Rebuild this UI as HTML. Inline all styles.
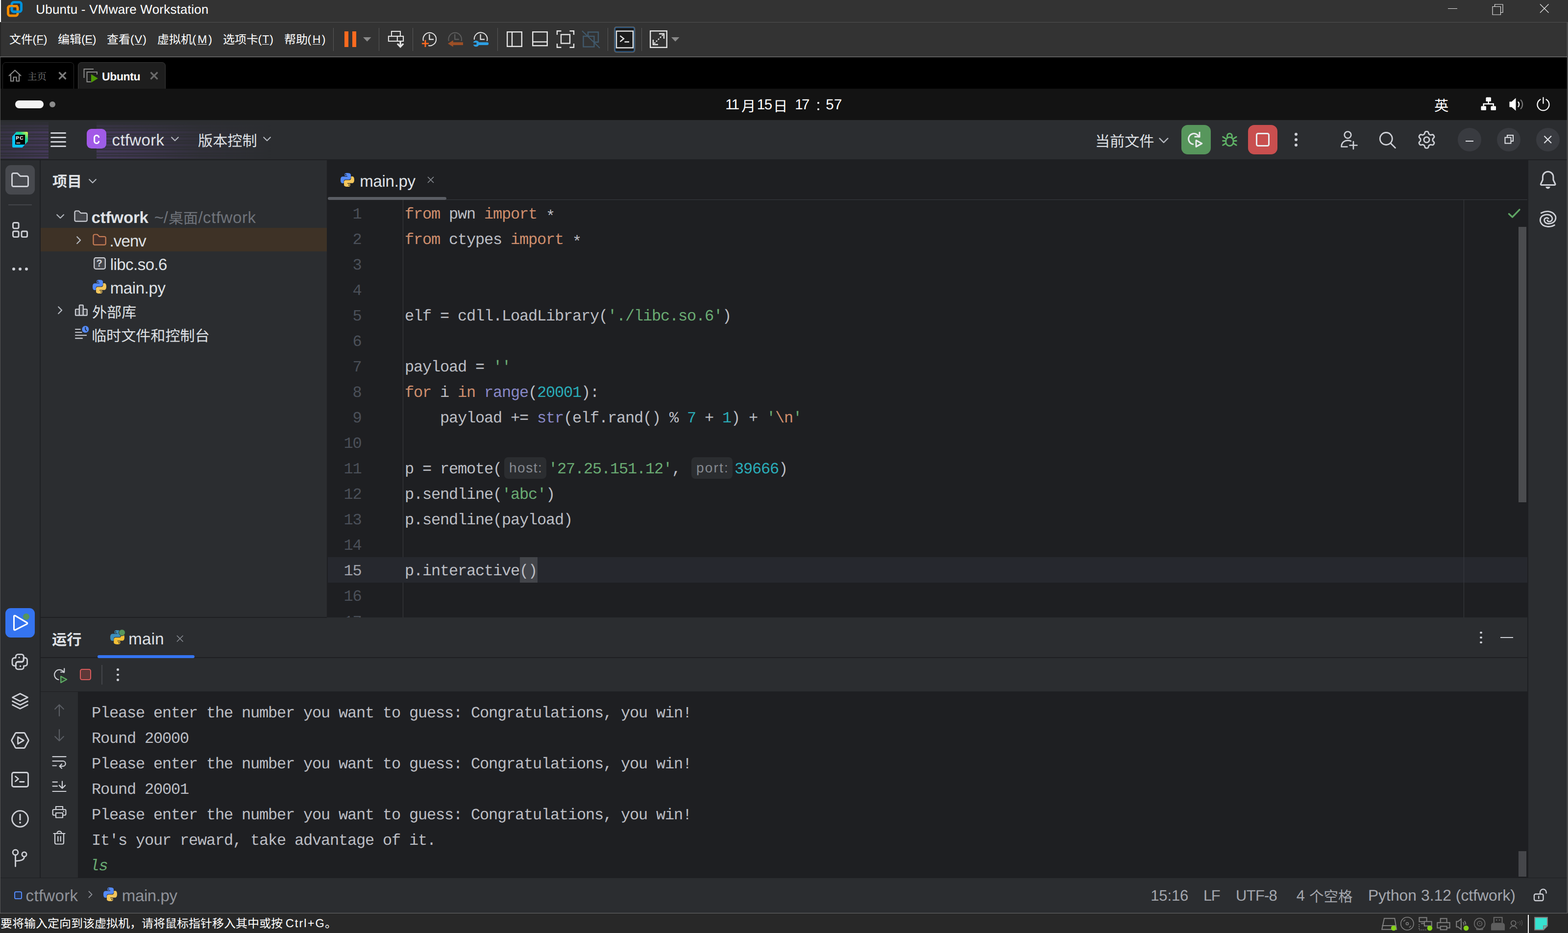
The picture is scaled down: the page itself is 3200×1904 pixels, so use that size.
<!DOCTYPE html><html lang="zh-CN"><head><meta charset="utf-8"><title>Ubuntu - VMware Workstation</title><style>
html,body{margin:0;padding:0}
body{width:3200px;height:1904px;position:relative;overflow:hidden;background:#1e1f22;font-family:"Liberation Sans",sans-serif;font-kerning:none;text-rendering:geometricPrecision}
body>div,body>span,body>svg{position:absolute}
.t{white-space:pre;display:block}
.c{overflow:visible}
.c text{font-family:"Liberation Sans","Noto Sans CJK SC",sans-serif;white-space:pre}
.i{overflow:visible;display:block}
.m{font:400 32px/42px 'Liberation Mono',monospace;letter-spacing:-1.203px}
</style></head><body><div style="left:0px;top:0px;width:3200px;height:1904px;background:#2b2d30;"></div>
<div style="left:0px;top:0px;width:3200px;height:46px;background:#333333;"></div>
<div style="left:0px;top:0px;width:2px;height:45px;background:#ffffff;"></div>
<div style="left:2px;top:45px;width:3198px;height:1px;background:#505050;"></div>
<svg class="i" style="left:12px;top:0px;" width="40" height="40" viewBox="0 0 40 40"><rect x="4.5" y="12.5" width="19.5" height="19.5" rx="4" fill="none" stroke="#f38b00" stroke-width="5"/><rect x="12" y="4.5" width="19.5" height="19.5" rx="4" fill="none" stroke="#0091da" stroke-width="5"/><path d="M4.5 22 V16.5 a4 4 0 0 1 4 -4 H24" fill="none" stroke="#f38b00" stroke-width="5"/><path d="M12 14 V20 a4 4 0 0 0 4 4 h4" fill="none" stroke="#0091da" stroke-width="5"/></svg>
<span class="t" style="left:73.19px;top:1.79px;font:400 26px/34px 'Liberation Sans',sans-serif;color:#ffffff;letter-spacing:0.227px;">Ubuntu - VMware Workstation</span>
<div style="left:2955px;top:17px;width:19px;height:1.3px;background:#e6e6e6;"></div>
<svg class="i" style="left:3043px;top:6px;" width="28" height="28" viewBox="0 0 28 28"><path d="M3 7.5 H19.5 V24 H3 Z M7.5 7.5 V3 H24 V19.5 H19.5" fill="none" stroke="#e6e6e6" stroke-width="1.2"/></svg>
<svg class="i" style="left:3140px;top:6px;" width="24" height="24" viewBox="0 0 24 24"><path d="M3 2.5 L20.5 20 M20.5 2.5 L3 20" fill="none" stroke="#e6e6e6" stroke-width="1.3"/></svg>
<div style="left:0px;top:46px;width:3200px;height:69px;background:#333333;"></div>
<div style="left:0px;top:46px;width:2px;height:69px;background:#262626;"></div>
<div style="left:0px;top:114.5px;width:3200px;height:2.5px;background:#5c5c5c;"></div>
<svg class="c" style="left:18.50px;top:88.80px" width="1" height="1" fill="#ffffff"><text x="0" y="0" font-size="24">文件</text></svg>
<span class="t" style="left:66.57px;top:65.33px;font:400 23px/30px 'Liberation Sans',sans-serif;color:#ffffff;letter-spacing:0.242px;">(F)</span>
<div style="left:74.5px;top:89.8px;width:14.0px;height:1.3px;background:#ffffff;"></div>
<svg class="c" style="left:118.00px;top:88.80px" width="1" height="1" fill="#ffffff"><text x="0" y="0" font-size="24">编辑</text></svg>
<span class="t" style="left:166.07px;top:65.33px;font:400 23px/30px 'Liberation Sans',sans-serif;color:#ffffff;letter-spacing:-0.153px;">(E)</span>
<div style="left:173.6px;top:89.8px;width:15.3px;height:1.3px;background:#ffffff;"></div>
<svg class="c" style="left:218.00px;top:88.80px" width="1" height="1" fill="#ffffff"><text x="0" y="0" font-size="24">查看</text></svg>
<span class="t" style="left:266.07px;top:65.33px;font:400 23px/30px 'Liberation Sans',sans-serif;color:#ffffff;letter-spacing:1.097px;">(V)</span>
<div style="left:274.8px;top:89.8px;width:15.3px;height:1.3px;background:#ffffff;"></div>
<svg class="c" style="left:320.50px;top:88.80px" width="1" height="1" fill="#ffffff"><text x="0" y="0" font-size="24">虚拟机</text></svg>
<span class="t" style="left:392.57px;top:65.33px;font:400 23px/30px 'Liberation Sans',sans-serif;color:#ffffff;letter-spacing:2.938px;">(M)</span>
<div style="left:403.2px;top:89.8px;width:19.2px;height:1.3px;background:#ffffff;"></div>
<svg class="c" style="left:454.50px;top:88.80px" width="1" height="1" fill="#ffffff"><text x="0" y="0" font-size="24">选项卡</text></svg>
<span class="t" style="left:526.57px;top:65.33px;font:400 23px/30px 'Liberation Sans',sans-serif;color:#ffffff;letter-spacing:0.992px;">(T)</span>
<div style="left:535.2px;top:89.8px;width:14.0px;height:1.3px;background:#ffffff;"></div>
<svg class="c" style="left:579.50px;top:88.80px" width="1" height="1" fill="#ffffff"><text x="0" y="0" font-size="24">帮助</text></svg>
<span class="t" style="left:627.57px;top:65.33px;font:400 23px/30px 'Liberation Sans',sans-serif;color:#ffffff;letter-spacing:2.462px;">(H)</span>
<div style="left:637.7px;top:89.8px;width:16.6px;height:1.3px;background:#ffffff;"></div>
<div style="left:680px;top:57px;width:1px;height:47px;background:#585858;"></div>
<div style="left:773px;top:57px;width:1px;height:47px;background:#585858;"></div>
<div style="left:842px;top:57px;width:1px;height:47px;background:#585858;"></div>
<div style="left:1015px;top:57px;width:1px;height:47px;background:#585858;"></div>
<div style="left:1240px;top:57px;width:1px;height:47px;background:#585858;"></div>
<div style="left:1309px;top:57px;width:1px;height:47px;background:#585858;"></div>
<div style="left:702.7px;top:64px;width:8.4px;height:32px;background:#ff6a1f;"></div>
<div style="left:718.5px;top:64px;width:8.4px;height:32px;background:#ff6a1f;"></div>
<svg class="i" style="left:740.5px;top:75.8px;" width="17" height="9" viewBox="0 0 17 9"><path d="M0 0 H16.5 L8.25 8.7 Z" fill="#8a8a8a"/></svg>
<svg class="i" style="left:1369.5px;top:75.8px;" width="17" height="9" viewBox="0 0 17 9"><path d="M0 0 H16.5 L8.25 8.7 Z" fill="#8a8a8a"/></svg>
<svg class="i" style="left:780px;top:50px;" width="230" height="60" viewBox="0 0 230 60"><g fill="none" stroke="#e4e4e4" stroke-width="2.1"><rect x="19" y="14" width="18" height="10"/><rect x="12.9" y="24" width="30.2" height="10"/><path d="M30.9 24.0 V34"/></g><path d="M37.1 35.0 V44" stroke="#e4e4e4" stroke-width="3.4" fill="none"/><path d="M31.0 39.2 L37.1 45.6 L43.2 39.2" fill="none" stroke="#e4e4e4" stroke-width="3.4"/><path d="M84.0 33.6 A13.3 13.3 0 1 1 94.2 43.1" fill="none" stroke="#e4e4e4" stroke-width="2"/><path d="M96.4 19.8 V30.4 H105" fill="none" stroke="#e4e4e4" stroke-width="2.2"/><path d="M88.0 31.8 V46 M81.0 38.9 H95" fill="none" stroke="#ff6a1f" stroke-width="2.8"/><path d="M135.9 33.7 A13.3 13.3 0 1 1 161.5 33.7" fill="none" stroke="#5e5e5e" stroke-width="2"/><path d="M148.3 19.8 V30.4 H156.8" fill="none" stroke="#5e5e5e" stroke-width="2.2"/><path d="M133.9 38.9 L144.8 32.3 V36.2 H165 V42 H144.8 V45.6 Z" fill="#9c4f26"/><path d="M187.9 30.8 A13.3 13.3 0 1 1 213.8 33.7" fill="none" stroke="#e4e4e4" stroke-width="2"/><path d="M200.6 19.8 V30.4 H209" fill="none" stroke="#e4e4e4" stroke-width="2.2"/><path d="M193.0 36.2 H214.3 a2.9 2.9 0 0 1 0 5.8 H193 Z" fill="#2d9fe3"/><circle cx="191.6" cy="39" r="6.3" fill="#2d9fe3"/><rect x="184.5" y="36.9" width="8" height="4.4" fill="#333"/></svg>
<svg class="i" style="left:1032px;top:62px;" width="36" height="36" viewBox="0 0 36 36"><g fill="none" stroke="#e4e4e4" stroke-width="2.4"><rect x="3.2" y="3.2" width="29.6" height="29.6"/><path d="M13 3 V33"/></g></svg>
<svg class="i" style="left:1084px;top:62px;" width="36" height="36" viewBox="0 0 36 36"><g fill="none" stroke="#e4e4e4" stroke-width="2.4"><rect x="3.2" y="3.2" width="29.6" height="28"/><path d="M3 23.5 H33"/></g></svg>
<svg class="i" style="left:1134px;top:60px;" width="40" height="40" viewBox="0 0 40 40"><g fill="none" stroke="#e4e4e4" stroke-width="2.4"><rect x="11" y="10.5" width="18" height="18"/><path d="M3 11 V3.2 H11.5 M28.5 3.2 H37 V11 M37 29 V36.8 H28.5 M11.5 36.8 H3 V29"/></g></svg>
<svg class="i" style="left:1186px;top:60px;" width="40" height="40" viewBox="0 0 40 40"><g fill="none" stroke="#41596b" stroke-width="2.4"><path d="M14 14 V5.5 H35 V26 H26.5"/><rect x="4.5" y="14" width="22" height="21.5"/><path d="M2 3 L38 38"/></g></svg>
<svg class="i" style="left:1253px;top:54px;" width="44" height="54" viewBox="0 0 44 54"><rect x="1" y="1" width="41.5" height="51.5" rx="4" fill="#1c1c1c" stroke="#6a6a6a" stroke-width="1.6"/><rect x="2.4" y="2.4" width="38.7" height="48.7" rx="3" fill="none" stroke="#1d5f9e" stroke-width="1.4"/><rect x="5" y="9.5" width="34" height="34" fill="none" stroke="#e4e4e4" stroke-width="2.4"/><path d="M12.5 19 L20 25 L12.5 31 M21.5 31.5 H31" fill="none" stroke="#e4e4e4" stroke-width="2.4"/></svg>
<svg class="i" style="left:1324px;top:60px;" width="40" height="40" viewBox="0 0 40 40"><g fill="none" stroke="#e4e4e4" stroke-width="2.4"><rect x="3.2" y="3.2" width="33.6" height="33.6"/><path d="M21 9 H31 V19 M9 21 V31 H19"/><path d="M29 11 L11 29" stroke-dasharray="3 2.6"/></g></svg>
<div style="left:0px;top:117px;width:3200px;height:64px;background:#000000;"></div>
<div style="left:5px;top:127px;width:144px;height:60px;border:1.5px solid #2b2b2b;border-radius:7px 7px 0 0;background:#000;box-sizing:content-box"></div>
<div style="left:159px;top:127px;width:177px;height:60px;border:1.5px solid #3a3a3a;border-radius:7px 7px 0 0;background:#1e1e1e;box-sizing:content-box"></div>
<svg class="i" style="left:15px;top:140px;" width="32" height="30" viewBox="0 0 32 30"><path d="M3 15 L15.5 3.5 L28 15 M7 12.5 V25.5 H12.5 V17.5 H18.5 V25.5 H24 V12.5" fill="none" stroke="#8a8a8a" stroke-width="2.2"/></svg>
<svg class="c" style="left:56.00px;top:163.40px" width="1" height="1" fill="#7c7c7c"><text x="0" y="0" font-size="19.5" style="font-family:'Liberation Serif','Noto Serif CJK SC',serif">主页</text></svg>
<svg class="i" style="left:119px;top:146px;" width="17" height="17" viewBox="0 0 17 17"><path d="M1.5 1.5 L15.5 15.5 M15.5 1.5 L1.5 15.5" stroke="#7c7c7c" stroke-width="3.2" fill="none"/></svg>
<svg class="i" style="left:306px;top:146px;" width="17" height="17" viewBox="0 0 17 17"><path d="M1.5 1.5 L15.5 15.5 M15.5 1.5 L1.5 15.5" stroke="#6a6a6a" stroke-width="3.2" fill="none"/></svg>
<svg class="i" style="left:169px;top:138px;" width="34" height="32" viewBox="0 0 34 32"><path d="M2.5 21 V3 H22" fill="none" stroke="#8a8a8a" stroke-width="2"/><path d="M16.5 29 H8.5 V9 H29 V14" fill="none" stroke="#8a8a8a" stroke-width="2"/><path d="M17 13.5 L31 22 L17 30.5 Z" fill="#4e9a06"/></svg>
<span class="t" style="left:208.12px;top:140.63px;font:700 23px/30px 'Liberation Sans',sans-serif;color:#ffffff;letter-spacing:-0.414px;">Ubuntu</span>
<div style="left:0px;top:181px;width:3198px;height:64px;background:#131313;"></div>
<div style="left:31px;top:205px;width:58px;height:16px;border-radius:8px;background:#f3f3f3"></div>
<div style="left:101px;top:207px;width:12px;height:12px;border-radius:6px;background:#8c8c8c"></div>
<span class="t" style="left:1480.25px;top:194.77px;font:400 29.5px/38px 'Liberation Sans',sans-serif;color:#ffffff;letter-spacing:-1.625px;">11</span>
<svg class="c" style="left:1512.50px;top:226.60px" width="1" height="1" fill="#ffffff"><text x="0" y="0" font-size="29.3">月</text></svg>
<span class="t" style="left:1544.75px;top:194.77px;font:400 29.5px/38px 'Liberation Sans',sans-serif;color:#ffffff;letter-spacing:-1.327px;">15</span>
<svg class="c" style="left:1577.60px;top:226.60px" width="1" height="1" fill="#ffffff"><text x="0" y="0" font-size="29.3">日</text></svg>
<span class="t" style="left:1622.25px;top:194.77px;font:400 29.5px/38px 'Liberation Sans',sans-serif;color:#ffffff;letter-spacing:-2.582px;">17</span>
<div style="left:1668px;top:207.6px;width:4px;height:4px;border-radius:50%;background:#fff"></div>
<div style="left:1668px;top:221px;width:4px;height:4px;border-radius:50%;background:#fff"></div>
<span class="t" style="left:1685.32px;top:194.77px;font:400 29.5px/38px 'Liberation Sans',sans-serif;color:#ffffff;letter-spacing:0.352px;">57</span>
<svg class="c" style="left:2927.00px;top:226.30px" width="1" height="1" fill="#ffffff"><text x="0" y="0" font-size="29.3">英</text></svg>
<svg class="i" style="left:3022px;top:198px;" width="32" height="28" viewBox="0 0 32 28"><g fill="#fff"><rect x="10.5" y="0.5" width="10.5" height="8.5" rx="1.5"/><rect x="0.5" y="18.5" width="10.5" height="8.5" rx="1.5"/><rect x="20.5" y="18.5" width="10.5" height="8.5" rx="1.5"/></g><path d="M15.75 9 V14 M5.75 18.5 V14 H25.75 V18.5" fill="none" stroke="#fff" stroke-width="2.4"/></svg>
<svg class="i" style="left:3079px;top:199px;" width="32" height="28" viewBox="0 0 32 28"><path d="M1.5 8.5 H6 L14.5 1 V27 L6 19.5 H1.5 Z" fill="#fff"/><path d="M19 8.5 A8 8 0 0 1 19 19.5" fill="none" stroke="#fff" stroke-width="2.2"/><path d="M24 4.5 A13 13 0 0 1 24 23.5" fill="none" stroke="#777" stroke-width="2.2"/></svg>
<svg class="i" style="left:3135px;top:198px;" width="30" height="28" viewBox="0 0 30 28"><path d="M8.5 5 A12 12 0 1 0 20.5 5" fill="none" stroke="#fff" stroke-width="2.2" stroke-linecap="round"/><path d="M14.5 1 V13" stroke="#fff" stroke-width="2.2" stroke-linecap="round"/></svg>
<div style="left:1px;top:245px;width:3197px;height:80px;background:#2b2d30;"></div>
<div style="left:1px;top:325px;width:3197px;height:2px;background:#1e1f22;"></div>
<div style="left:1px;top:246px;width:98px;height:78px;background:repeating-linear-gradient(to bottom,rgba(118,82,170,.5) 0,rgba(118,82,170,.5) 1.3px,transparent 1.3px,transparent 2.6px);-webkit-mask-image:linear-gradient(to right,rgba(0,0,0,.55),#000);mask-image:linear-gradient(to right,rgba(0,0,0,.55),#000)"></div>
<div style="left:197px;top:246px;width:420px;height:78px;background:repeating-linear-gradient(to bottom,rgba(118,82,170,.5) 0,rgba(118,82,170,.5) 1.3px,transparent 1.3px,transparent 2.6px);-webkit-mask-image:linear-gradient(to right,#000 0,rgba(0,0,0,.75) 20%,rgba(0,0,0,.25) 50%,transparent 85%);mask-image:linear-gradient(to right,#000 0,rgba(0,0,0,.75) 20%,rgba(0,0,0,.25) 50%,transparent 85%)"></div>
<div style="left:1px;top:246px;width:620px;height:78px;background:linear-gradient(to bottom,#2b2d30 0,rgba(43,45,48,0) 30%)"></div>
<div style="left:99px;top:246px;width:98px;height:78px;background:#2b2d30;"></div>
<svg class="i" style="left:25px;top:269px;" width="32" height="32" viewBox="0 0 32 32"><defs><linearGradient id="pcg" x1="0" y1="1" x2="1" y2="0"><stop offset="0" stop-color="#07c3f2"/><stop offset=".45" stop-color="#07c3f2"/><stop offset=".72" stop-color="#21d789"/><stop offset="1" stop-color="#fcf84a"/></linearGradient></defs><path d="M8.5 0 H29.5 a2.5 2.5 0 0 1 2.5 2.5 V19.5 L20.5 32 H2 a2 2 0 0 1 -2 -2 V9.5 Z" fill="url(#pcg)"/><rect x="6" y="6" width="20" height="20" fill="#000"/><rect x="8.3" y="22" width="8" height="1.5" fill="#fff"/></svg>
<span class="t" style="left:32.32px;top:276.16px;font:700 10.2px/13px 'Liberation Sans',sans-serif;color:#ffffff;letter-spacing:1.192px;">PC</span>
<div style="left:103px;top:270.0px;width:32px;height:3px;border-radius:1.5px;background:#ced0d6"></div>
<div style="left:103px;top:279.0px;width:32px;height:3px;border-radius:1.5px;background:#ced0d6"></div>
<div style="left:103px;top:288.0px;width:32px;height:3px;border-radius:1.5px;background:#ced0d6"></div>
<div style="left:103px;top:297.0px;width:32px;height:3px;border-radius:1.5px;background:#ced0d6"></div>
<div style="left:177px;top:263px;width:40px;height:40px;border-radius:9.5px;background:linear-gradient(135deg,#a756e8,#9a5fe6)"></div>
<svg class="i" style="left:190.5px;top:274.5px;" width="12.25" height="18.75" viewBox="0 0 12.25 18.75"><path d="M10.7 6 V5.8 A4.55 4.55 0 0 0 1.6 5.8 V12.95 A4.55 4.55 0 0 0 10.7 12.95 V12.7" fill="none" stroke="#fff" stroke-width="3.1"/></svg>
<span class="t" style="left:228.60px;top:263.56px;font:400 33px/43px 'Liberation Sans',sans-serif;color:#dfe1e5;letter-spacing:0.307px;">ctfwork</span>
<svg class="i" style="left:349px;top:279px;" width="16" height="9.2" viewBox="0 0 16 9.2"><path d="M1.2 1.2 L8 8 L14.8 1.2" fill="none" stroke="#b4b8bf" stroke-width="2.2" stroke-linecap="round" stroke-linejoin="round"/></svg>
<svg class="c" style="left:404.30px;top:297.50px" width="1" height="1" fill="#dfe1e5"><text x="0" y="0" font-size="30.15">版本控制</text></svg>
<svg class="i" style="left:536.5px;top:279px;" width="16" height="9.2" viewBox="0 0 16 9.2"><path d="M1.2 1.2 L8 8 L14.8 1.2" fill="none" stroke="#b4b8bf" stroke-width="2.2" stroke-linecap="round" stroke-linejoin="round"/></svg>
<svg class="c" style="left:2234.90px;top:299.10px" width="1" height="1" fill="#dfe1e5"><text x="0" y="0" font-size="30.1">当前文件</text></svg>
<svg class="i" style="left:2365.2px;top:281.4px;" width="19.8" height="11.4" viewBox="0 0 16 9.2"><path d="M1.2 1.2 L8 8 L14.8 1.2" fill="none" stroke="#b4b8bf" stroke-width="2.0" stroke-linecap="round" stroke-linejoin="round"/></svg>
<div style="left:2411px;top:255px;width:60px;height:60px;border-radius:13px;background:#57965c"></div>
<svg class="i" style="left:2423px;top:268px;" width="36" height="36" viewBox="0 0 36 36"><path d="M12.9 26.5 A11 11 0 1 1 24.2 12.6" fill="none" stroke="#e9ebee" stroke-width="3" stroke-linecap="butt"/><path d="M14.5 11 H25 V1" fill="none" stroke="#e9ebee" stroke-width="3" stroke-linecap="butt" stroke-linejoin="miter"/><path d="M18 18.4 L29.8 24.9 L18 31.4 Z" fill="#57965c" stroke="#e9ebee" stroke-width="3" stroke-linejoin="round"/></svg>
<svg class="i" style="left:2493.7px;top:270.5px;" width="30.8" height="28.3" viewBox="0 0 30.8 28.3"><g fill="none" stroke="#5fb266" stroke-width="2.9" stroke-linecap="round"><path d="M7.75 17 V16.6 a7.65 7.65 0 0 1 15.3 0 V19.1 a7.65 7.65 0 0 1 -15.3 0 Z"/><path d="M10.55 9.3 V6.3 a4.85 4.85 0 0 1 9.7 0 V9.3"/><path d="M1.6 8.3 L7.2 11.8 M29.2 8.3 L23.6 11.8 M1.5 16.5 H7.4 M29.3 16.5 H23.4 M1.6 25.3 L7.4 21.8 M29.2 25.3 L23.4 21.8"/></g></svg>
<div style="left:2547px;top:255px;width:60px;height:60px;border-radius:13px;background:#c94f4f"></div>
<div style="left:2563px;top:271px;width:22px;height:22px;border:3px solid #e9ebee;border-radius:4.5px"></div>
<div style="left:2641.5px;top:271px;width:6px;height:6px;border-radius:3px;background:#ced0d6"></div>
<div style="left:2641.5px;top:282px;width:6px;height:6px;border-radius:3px;background:#ced0d6"></div>
<div style="left:2641.5px;top:293px;width:6px;height:6px;border-radius:3px;background:#ced0d6"></div>
<svg class="i" style="left:2735px;top:266px;" width="38" height="40" viewBox="0 0 38 40"><g fill="none" stroke="#ced0d6" stroke-width="2.7" stroke-linecap="round"><circle cx="15.5" cy="9.3" r="6.8"/><path d="M2.6 33.5 C2.6 25.5 8 20.6 15.8 20.6 C18 20.6 20 21 21.8 21.8 M2.6 33.5 H14.5"/><path d="M27 23 V38 M19.5 30.5 H34.5"/></g></svg>
<svg class="i" style="left:2813px;top:268px;" width="38" height="38" viewBox="0 0 38 38"><g fill="none" stroke="#ced0d6" stroke-width="2.8" stroke-linecap="round"><circle cx="15.8" cy="15" r="12.5"/><path d="M25 24.2 L34.5 33.7"/></g></svg>
<svg class="i" style="left:2891.5px;top:265.5px;" width="39" height="39" viewBox="0 0 39 39"><path d="M19.50 2.35 L20.24 2.38 L20.97 2.48 L21.69 2.69 L22.35 3.12 L22.91 3.93 L23.29 5.15 L23.58 6.37 L23.90 7.21 L24.30 7.70 L24.75 8.05 L25.21 8.33 L25.68 8.60 L26.14 8.87 L26.62 9.13 L27.14 9.34 L27.77 9.44 L28.66 9.31 L29.86 8.94 L31.11 8.66 L32.09 8.74 L32.79 9.10 L33.33 9.62 L33.78 10.20 L34.18 10.82 L34.52 11.48 L34.80 12.17 L34.97 12.89 L34.94 13.68 L34.52 14.57 L33.65 15.51 L32.73 16.37 L32.18 17.07 L31.94 17.66 L31.87 18.22 L31.85 18.76 L31.85 19.30 L31.85 19.84 L31.87 20.38 L31.94 20.94 L32.18 21.53 L32.73 22.23 L33.65 23.09 L34.52 24.03 L34.94 24.92 L34.97 25.71 L34.80 26.43 L34.52 27.12 L34.18 27.77 L33.78 28.40 L33.33 28.98 L32.79 29.50 L32.09 29.86 L31.11 29.94 L29.86 29.66 L28.66 29.29 L27.77 29.16 L27.14 29.26 L26.62 29.47 L26.14 29.73 L25.68 30.00 L25.21 30.27 L24.75 30.55 L24.30 30.90 L23.90 31.39 L23.58 32.23 L23.29 33.45 L22.91 34.67 L22.35 35.48 L21.69 35.91 L20.97 36.12 L20.24 36.22 L19.50 36.25 L18.76 36.22 L18.03 36.12 L17.31 35.91 L16.65 35.48 L16.09 34.67 L15.71 33.45 L15.42 32.23 L15.10 31.39 L14.70 30.90 L14.25 30.55 L13.79 30.27 L13.32 30.00 L12.86 29.73 L12.38 29.47 L11.86 29.26 L11.23 29.16 L10.34 29.29 L9.14 29.66 L7.89 29.94 L6.91 29.86 L6.21 29.50 L5.67 28.98 L5.22 28.40 L4.82 27.78 L4.48 27.12 L4.20 26.43 L4.03 25.71 L4.06 24.92 L4.48 24.03 L5.35 23.09 L6.27 22.23 L6.82 21.53 L7.06 20.94 L7.13 20.38 L7.15 19.84 L7.15 19.30 L7.15 18.76 L7.13 18.22 L7.06 17.66 L6.82 17.07 L6.27 16.37 L5.35 15.51 L4.48 14.57 L4.06 13.68 L4.03 12.89 L4.20 12.17 L4.48 11.48 L4.82 10.83 L5.22 10.20 L5.67 9.62 L6.21 9.10 L6.91 8.74 L7.89 8.66 L9.14 8.94 L10.34 9.31 L11.23 9.44 L11.86 9.34 L12.38 9.13 L12.86 8.87 L13.33 8.60 L13.79 8.33 L14.25 8.05 L14.70 7.70 L15.10 7.21 L15.42 6.37 L15.71 5.15 L16.09 3.93 L16.65 3.12 L17.31 2.69 L18.03 2.48 L18.76 2.38 Z" fill="none" stroke="#ced0d6" stroke-width="2.8" stroke-linejoin="round"/><circle cx="19.5" cy="19.3" r="5.6" fill="none" stroke="#ced0d6" stroke-width="2.8"/></svg>
<div style="left:2974.5px;top:260.5px;width:48px;height:48px;border-radius:24px;background:#393b40"></div>
<div style="left:3054.5px;top:260.5px;width:48px;height:48px;border-radius:24px;background:#393b40"></div>
<div style="left:3134.5px;top:260.5px;width:48px;height:48px;border-radius:24px;background:#393b40"></div>
<div style="left:2991px;top:286.5px;width:16px;height:2px;background:#e0e2e6;"></div>
<svg class="i" style="left:3069px;top:273px;" width="22" height="22" viewBox="0 0 22 22"><path d="M2.5 7.5 H14.5 V19.5 H2.5 Z M7 7.5 V3 H19 V15 H14.5" fill="none" stroke="#e0e2e6" stroke-width="2"/></svg>
<svg class="i" style="left:3150px;top:276px;" width="18" height="18" viewBox="0 0 18 18"><path d="M1.5 1.5 L16 16 M16 1.5 L1.5 16" fill="none" stroke="#e0e2e6" stroke-width="2.2"/></svg>
<div style="left:0px;top:117px;width:1px;height:1746px;background:#555555;"></div>
<div style="left:81px;top:327px;width:2px;height:1464px;background:#1e1f22;"></div>
<div style="left:11px;top:337px;width:60px;height:60px;border-radius:11px;background:#47494e"></div>
<svg class="i" style="left:21px;top:350px;" width="40" height="34" viewBox="0 0 40 34"><path d="M3.5 6.5 a3 3 0 0 1 3 -3 H14.5 L20.5 9.5 H33.5 a3 3 0 0 1 3 3 V27.5 a3 3 0 0 1 -3 3 H6.5 a3 3 0 0 1 -3 -3 Z" fill="none" stroke="#ced0d6" stroke-width="2.9" stroke-linejoin="round"/></svg>
<div style="left:17px;top:417px;width:48px;height:2px;background:#43454a;"></div>
<svg class="i" style="left:23px;top:451px;" width="36" height="36" viewBox="0 0 36 36"><rect x="3.5" y="3.5" width="11.6" height="11.6" rx="2.6" fill="none" stroke="#ced0d6" stroke-width="2.9"/><rect x="3.5" y="21" width="11.6" height="11.6" rx="2.6" fill="none" stroke="#ced0d6" stroke-width="2.9"/><rect x="21" y="21" width="11.6" height="11.6" rx="2.6" fill="none" stroke="#ced0d6" stroke-width="2.9"/></svg>
<div style="left:24.7px;top:545.7px;width:6.6px;height:6.6px;border-radius:50%;background:#ced0d6"></div>
<div style="left:37.7px;top:545.7px;width:6.6px;height:6.6px;border-radius:50%;background:#ced0d6"></div>
<div style="left:50.7px;top:545.7px;width:6.6px;height:6.6px;border-radius:50%;background:#ced0d6"></div>
<div style="left:11px;top:1241px;width:60px;height:60px;border-radius:11px;background:#3574f0"></div>
<svg class="i" style="left:23px;top:1251px;" width="40" height="40" viewBox="0 0 40 40"><path d="M5.5 6.8 a1.6 1.6 0 0 1 2.4 -1.4 L32 19.6 a1.6 1.6 0 0 1 0 2.8 L7.9 34.6 a1.6 1.6 0 0 1 -2.4 -1.4 Z" fill="none" stroke="#fff" stroke-width="3" stroke-linejoin="round"/></svg>
<div style="left:46px;top:1250.5px;width:15px;height:15px;border-radius:50%;background:#57965c;border:1.5px solid #3574f0;box-sizing:border-box"></div>
<svg class="i" style="left:23.4px;top:1333.3px;" width="34.6" height="35.3" viewBox="0 0 34 34"><g fill="none" stroke="#ced0d6" stroke-width="2.75" stroke-linejoin="round"><path d="M13.5 2 H20.5 a4.5 4.5 0 0 1 4.5 4.5 V12.5 a4 4 0 0 1 -4 4 H13.5 a4 4 0 0 0 -4 4 V25 H6.5 a4.5 4.5 0 0 1 -4.5 -4.5 V13.5 a4.5 4.5 0 0 1 4.5 -4.5 H9 V6.5 a4.5 4.5 0 0 1 4.5 -4.5 Z"/><path d="M13.5 2 H20.5 a4.5 4.5 0 0 1 4.5 4.5 V12.5 a4 4 0 0 1 -4 4 H13.5 a4 4 0 0 0 -4 4 V25 H6.5 a4.5 4.5 0 0 1 -4.5 -4.5 V13.5 a4.5 4.5 0 0 1 4.5 -4.5 H9 V6.5 a4.5 4.5 0 0 1 4.5 -4.5 Z" transform="rotate(180 17 17)"/></g><circle cx="15.8" cy="8.3" r="1.7" fill="#ced0d6"/><circle cx="18.2" cy="25.7" r="1.7" fill="#ced0d6"/></svg>
<svg class="i" style="left:23px;top:1413px;" width="36" height="36" viewBox="0 0 36 36"><g fill="none" stroke="#ced0d6" stroke-width="2.8" stroke-linejoin="round" stroke-linecap="round"><path d="M18 2.5 L33.5 10.3 L18 18 L2.5 10.3 Z"/><path d="M2.5 18 L18 25.8 L33.5 18"/><path d="M2.5 25.5 L18 33.3 L33.5 25.5"/></g></svg>
<svg class="i" style="left:21px;top:1493px;" width="40" height="36" viewBox="0 0 40 36"><g fill="none" stroke="#ced0d6" stroke-width="2.8" stroke-linejoin="round"><path d="M12 2.5 H28 a2 2 0 0 1 1.7 1 L37 17 a2 2 0 0 1 0 2 L29.7 32.5 a2 2 0 0 1 -1.7 1 H12 a2 2 0 0 1 -1.7 -1 L3 19 a2 2 0 0 1 0 -2 L10.3 3.5 a2 2 0 0 1 1.7 -1 Z"/><path d="M15.5 11 L27.5 18 L15.5 25 Z"/></g></svg>
<svg class="i" style="left:22px;top:1574px;" width="38" height="34" viewBox="0 0 38 34"><g fill="none" stroke="#ced0d6" stroke-width="2.8" stroke-linejoin="round" stroke-linecap="round"><rect x="2.5" y="2.5" width="33" height="29" rx="3.5"/><path d="M9.5 10.5 L15.5 15.5 L9.5 20.5 M18.5 21.5 H27"/></g></svg>
<svg class="i" style="left:22px;top:1652px;" width="38" height="38" viewBox="0 0 38 38"><circle cx="19" cy="19" r="16.4" fill="none" stroke="#ced0d6" stroke-width="2.8"/><path d="M19 10 V21" stroke="#ced0d6" stroke-width="3" stroke-linecap="round"/><circle cx="19" cy="26.8" r="2" fill="#ced0d6"/></svg>
<svg class="i" style="left:23px;top:1731px;" width="36" height="40" viewBox="0 0 36 40"><g fill="none" stroke="#ced0d6" stroke-width="2.8" stroke-linecap="round"><circle cx="8.5" cy="8.5" r="5.4"/><circle cx="26.5" cy="12.5" r="4.6"/><path d="M8.5 14 V37 M26.5 17.2 C26.5 24 20 25.5 8.5 26"/></g></svg>
<div style="left:3118.5px;top:327px;width:79.5px;height:1464px;background:#2b2d30;"></div>
<div style="left:3117px;top:327px;width:1.5px;height:1464px;background:#1e1f22;"></div>
<svg class="i" style="left:3140px;top:347px;" width="38" height="40" viewBox="0 0 38 40"><path d="M8.4 20 V14 a10.8 10.8 0 0 1 21.6 0 V20 L34 28.5 a1.35 1.35 0 0 1 -1.2 1.95 H5.6 a1.35 1.35 0 0 1 -1.2 -1.95 Z" fill="none" stroke="#ced0d6" stroke-width="3" stroke-linejoin="round"/><path d="M14.4 34 H23.6 A4.6 4.3 0 0 1 14.4 34 Z" fill="#ced0d6"/></svg>
<svg class="i" style="left:3140px;top:428px;" width="38" height="38" viewBox="0 0 38 38"><g fill="none" stroke="#ced0d6" stroke-width="2.9" stroke-linecap="round"><path d="M5.28 6.81 C6.42 6.37 9.69 4.74 12.08 4.17 C14.47 3.60 16.95 3.10 19.62 3.42 C22.30 3.73 25.75 4.67 28.11 6.06 C30.47 7.44 32.64 9.83 33.77 11.72 C34.91 13.60 35.06 15.49 34.91 17.38 C34.75 19.26 34.12 21.39 32.83 23.04 C31.54 24.69 29.37 26.37 27.17 27.28 C24.97 28.19 21.82 28.67 19.62 28.51 C17.42 28.35 15.30 27.49 13.96 26.34 C12.63 25.19 11.76 23.04 11.60 21.62 C11.45 20.21 12.15 18.71 13.02 17.85 C13.88 16.98 15.61 16.43 16.79 16.43 C17.97 16.43 19.54 17.61 20.09 17.85"/><path d="M32.36 31.34 C31.34 31.76 28.66 33.38 26.23 33.89 C23.79 34.39 20.57 34.72 17.74 34.36 C14.91 34.00 11.48 33.13 9.25 31.72 C7.01 30.30 5.31 27.86 4.34 25.87 C3.36 23.87 3.05 21.78 3.40 19.74 C3.74 17.69 4.97 15.13 6.42 13.60 C7.86 12.08 10.03 11.18 12.08 10.58 C14.12 9.99 16.64 9.80 18.68 10.02 C20.72 10.24 22.85 10.84 24.34 11.91 C25.83 12.97 27.17 14.89 27.64 16.43 C28.11 17.97 27.80 19.92 27.17 21.15 C26.54 22.38 25.13 23.35 23.87 23.79 C22.61 24.23 20.64 24.15 19.62 23.79 C18.60 23.43 18.05 21.98 17.74 21.62"/></g></svg>
<div style="left:83px;top:1259px;width:584px;height:2px;background:#1e1f22;"></div>
<svg class="c" style="left:106.60px;top:381.30px" width="1" height="1" fill="#dfe1e5"><text x="0" y="0" font-size="30.1" font-weight="700">项目</text></svg>
<svg class="i" style="left:181px;top:364.5px;" width="16" height="9.2" viewBox="0 0 16 9.2"><path d="M1.2 1.2 L8 8 L14.8 1.2" fill="none" stroke="#b4b8bf" stroke-width="2.2" stroke-linecap="round" stroke-linejoin="round"/></svg>
<div style="left:83px;top:465px;width:584px;height:48px;background:#3e3226;"></div>
<svg class="i" style="left:114.8px;top:436.8px;" width="16.2" height="9.3" viewBox="0 0 16 9.2"><path d="M1.2 1.2 L8 8 L14.8 1.2" fill="none" stroke="#b4b8bf" stroke-width="2.2" stroke-linecap="round" stroke-linejoin="round"/></svg>
<svg class="i" style="left:150.5px;top:429px;" width="28.5" height="24.5" viewBox="0 0 28.5 24.5"><path d="M1.5 4.2 a2.7 2.7 0 0 1 2.7 -2.7 H9.6 L13.8 5.8 H24 a2.7 2.7 0 0 1 2.7 2.7 V20 a2.7 2.7 0 0 1 -2.7 2.7 H4.2 a2.7 2.7 0 0 1 -2.7 -2.7 Z" fill="#43454a" stroke="#ced0d6" stroke-width="2.2" stroke-linejoin="round"/></svg>
<span class="t" style="left:186.46px;top:422.06px;font:700 33px/43px 'Liberation Sans',sans-serif;color:#dfe1e5;letter-spacing:-0.141px;">ctfwork</span>
<span class="t" style="left:314.82px;top:422.06px;font:400 33px/43px 'Liberation Sans',sans-serif;color:#6f737a;letter-spacing:-0.258px;">~/</span>
<svg class="c" style="left:343.70px;top:455.90px" width="1" height="1" fill="#6f737a"><text x="0" y="0" font-size="30.1">桌面</text></svg>
<span class="t" style="left:404.40px;top:422.06px;font:400 33px/43px 'Liberation Sans',sans-serif;color:#6f737a;letter-spacing:0.553px;">/ctfwork</span>
<svg class="i" style="left:155.5px;top:481.5px;" width="9.3" height="16.2" viewBox="0 0 9.2 16"><path d="M1.2 1.2 L8 8 L1.2 14.8" fill="none" stroke="#b4b8bf" stroke-width="2.2" stroke-linecap="round" stroke-linejoin="round"/></svg>
<svg class="i" style="left:188.5px;top:477px;" width="28.5" height="24.5" viewBox="0 0 28.5 24.5"><path d="M1.5 4.2 a2.7 2.7 0 0 1 2.7 -2.7 H9.6 L13.8 5.8 H24 a2.7 2.7 0 0 1 2.7 2.7 V20 a2.7 2.7 0 0 1 -2.7 2.7 H4.2 a2.7 2.7 0 0 1 -2.7 -2.7 Z" fill="#45302a" stroke="#c77d55" stroke-width="2.2" stroke-linejoin="round"/></svg>
<span class="t" style="left:223.49px;top:470.06px;font:400 33px/43px 'Liberation Sans',sans-serif;color:#dfe1e5;letter-spacing:-0.875px;">.venv</span>
<svg class="i" style="left:190.5px;top:524.5px;" width="25" height="25" viewBox="0 0 25 25"><rect x="1.2" y="1.2" width="22.6" height="22.6" rx="3.4" fill="#43454a" stroke="#ced0d6" stroke-width="2.2"/></svg>
<span class="t" style="left:196.38px;top:525.07px;font:700 20px/26px 'Liberation Sans',sans-serif;color:#ced0d6;">?</span>
<span class="t" style="left:224.68px;top:518.06px;font:400 33px/43px 'Liberation Sans',sans-serif;color:#dfe1e5;letter-spacing:-0.536px;">libc.so.6</span>
<svg class="i" style="left:189px;top:571px;" width="28" height="28" viewBox="1 1 14 14"><path d="M7.9 1C5 1 5.2 2.3 5.2 2.3V4H8V4.6H3.2C3.2 4.6 1 4.3 1 8C1 11.7 2.9 11.5 2.9 11.5H4.3V9.6C4.3 9.6 4.2 7.7 6.2 7.7H9.7C9.7 7.7 11.5 7.7 11.5 5.9V2.9C11.5 2.9 11.8 1 7.9 1Z" fill="#548af7"/><circle cx="6.3" cy="2.65" r="0.62" fill="#2b2d30"/><g transform="rotate(180 8 8)"><path d="M7.9 1C5 1 5.2 2.3 5.2 2.3V4H8V4.6H3.2C3.2 4.6 1 4.3 1 8C1 11.7 2.9 11.5 2.9 11.5H4.3V9.6C4.3 9.6 4.2 7.7 6.2 7.7H9.7C9.7 7.7 11.5 7.7 11.5 5.9V2.9C11.5 2.9 11.8 1 7.9 1Z" fill="#f2c55c"/><circle cx="6.3" cy="2.65" r="0.62" fill="#2b2d30"/></g></svg>
<span class="t" style="left:224.71px;top:566.06px;font:400 33px/43px 'Liberation Sans',sans-serif;color:#dfe1e5;letter-spacing:-0.365px;">main.py</span>
<svg class="i" style="left:118px;top:624.8px;" width="9.3" height="16.2" viewBox="0 0 9.2 16"><path d="M1.2 1.2 L8 8 L1.2 14.8" fill="none" stroke="#b4b8bf" stroke-width="2.2" stroke-linecap="round" stroke-linejoin="round"/></svg>
<svg class="i" style="left:151px;top:620px;" width="30" height="26" viewBox="0 0 30 26"><g fill="#43454a" stroke="#ced0d6" stroke-width="2.2" stroke-linejoin="round"><rect x="3" y="11" width="7.9" height="12.7" rx="1.2"/><rect x="10.9" y="2.7" width="7.9" height="21" rx="1.2"/><rect x="18.8" y="11" width="7.9" height="12.7" rx="1.2"/></g></svg>
<svg class="c" style="left:187.80px;top:647.90px" width="1" height="1" fill="#dfe1e5"><text x="0" y="0" font-size="30.1">外部库</text></svg>
<svg class="i" style="left:152px;top:664px;" width="32" height="30" viewBox="0 0 32 30"><g stroke="#ced0d6" stroke-width="2.1" stroke-linecap="butt"><path d="M1.2 8 H12.5 M1.2 14.2 H15.5 M1.2 20.3 H25 M1.2 26.4 H16.8"/></g><circle cx="22.3" cy="8" r="7" fill="#548af7"/><path d="M22.3 4 V8.3 L24.6 10.8" fill="none" stroke="#1e1f22" stroke-width="1.7" stroke-linecap="round"/></svg>
<svg class="c" style="left:187.40px;top:695.90px" width="1" height="1" fill="#dfe1e5"><text x="0" y="0" font-size="30.1">临时文件和控制台</text></svg>
<div style="left:667px;top:327px;width:2450px;height:933px;background:#1e1f22;"></div>
<svg class="i" style="left:695px;top:353px;" width="28" height="28" viewBox="1 1 14 14"><path d="M7.9 1C5 1 5.2 2.3 5.2 2.3V4H8V4.6H3.2C3.2 4.6 1 4.3 1 8C1 11.7 2.9 11.5 2.9 11.5H4.3V9.6C4.3 9.6 4.2 7.7 6.2 7.7H9.7C9.7 7.7 11.5 7.7 11.5 5.9V2.9C11.5 2.9 11.8 1 7.9 1Z" fill="#548af7"/><circle cx="6.3" cy="2.65" r="0.62" fill="#1e1f22"/><g transform="rotate(180 8 8)"><path d="M7.9 1C5 1 5.2 2.3 5.2 2.3V4H8V4.6H3.2C3.2 4.6 1 4.3 1 8C1 11.7 2.9 11.5 2.9 11.5H4.3V9.6C4.3 9.6 4.2 7.7 6.2 7.7H9.7C9.7 7.7 11.5 7.7 11.5 5.9V2.9C11.5 2.9 11.8 1 7.9 1Z" fill="#f2c55c"/><circle cx="6.3" cy="2.65" r="0.62" fill="#1e1f22"/></g></svg>
<span class="t" style="left:734.31px;top:347.56px;font:400 33px/43px 'Liberation Sans',sans-serif;color:#dfe1e5;letter-spacing:-0.299px;">main.py</span>
<svg class="i" style="left:872px;top:360px;" width="14" height="14" viewBox="0 0 14 14"><path d="M1 1 L13 13 M13 1 L1 13" stroke="#868a91" stroke-width="1.7" fill="none"/></svg>
<div style="left:910px;top:407px;width:2207px;height:1px;background:#393b40;"></div>
<div style="left:669px;top:401.5px;width:241.5px;height:6.5px;border-radius:3.25px;background:#5a5d63"></div>
<div style="left:822px;top:408px;width:1px;height:852px;background:#393b40;"></div>
<div style="left:669px;top:1137px;width:2448px;height:52px;background:#26282e;"></div>
<div style="left:1060.5px;top:1137px;width:36px;height:52px;background:#43454a;"></div>
<div style="left:2987px;top:408px;width:1px;height:852px;background:#393b40;"></div>
<span class="t m" style="left:719.6px;top:417.48px;color:#4b5059">1</span>
<span class="t m" style="left:719.6px;top:469.48px;color:#4b5059">2</span>
<span class="t m" style="left:719.6px;top:521.48px;color:#4b5059">3</span>
<span class="t m" style="left:719.6px;top:573.48px;color:#4b5059">4</span>
<span class="t m" style="left:719.6px;top:625.48px;color:#4b5059">5</span>
<span class="t m" style="left:719.6px;top:677.48px;color:#4b5059">6</span>
<span class="t m" style="left:719.6px;top:729.48px;color:#4b5059">7</span>
<span class="t m" style="left:719.6px;top:781.48px;color:#4b5059">8</span>
<span class="t m" style="left:719.6px;top:833.48px;color:#4b5059">9</span>
<span class="t m" style="left:701.6px;top:885.48px;color:#4b5059">10</span>
<span class="t m" style="left:701.6px;top:937.48px;color:#4b5059">11</span>
<span class="t m" style="left:701.6px;top:989.48px;color:#4b5059">12</span>
<span class="t m" style="left:701.6px;top:1041.48px;color:#4b5059">13</span>
<span class="t m" style="left:701.6px;top:1093.48px;color:#4b5059">14</span>
<span class="t m" style="left:701.6px;top:1145.48px;color:#a1a3ab">15</span>
<span class="t m" style="left:701.6px;top:1197.48px;color:#4b5059">16</span>
<span class="t m" style="left:701.6px;top:1249.48px;color:#4b5059">17</span>
<span class="t m" style="left:826.00px;top:417.48px;color:#cf8e6d">from</span>
<span class="t m" style="left:898.00px;top:417.48px;color:#bcbec4"> pwn </span>
<span class="t m" style="left:988.00px;top:417.48px;color:#cf8e6d">import</span>
<span class="t m" style="left:1096.00px;top:422.48px;color:#bcbec4"> *</span>
<span class="t m" style="left:826.00px;top:469.48px;color:#cf8e6d">from</span>
<span class="t m" style="left:898.00px;top:469.48px;color:#bcbec4"> ctypes </span>
<span class="t m" style="left:1042.00px;top:469.48px;color:#cf8e6d">import</span>
<span class="t m" style="left:1150.00px;top:474.48px;color:#bcbec4"> *</span>
<span class="t m" style="left:826.00px;top:625.48px;color:#bcbec4">elf = cdll.LoadLibrary(</span>
<span class="t m" style="left:1240.00px;top:625.48px;color:#6aab73">&#x27;./libc.so.6&#x27;</span>
<span class="t m" style="left:1474.00px;top:625.48px;color:#bcbec4">)</span>
<span class="t m" style="left:826.00px;top:729.48px;color:#bcbec4">payload = </span>
<span class="t m" style="left:1006.00px;top:729.48px;color:#6aab73">&#x27;&#x27;</span>
<span class="t m" style="left:826.00px;top:781.48px;color:#cf8e6d">for</span>
<span class="t m" style="left:880.00px;top:781.48px;color:#bcbec4"> i </span>
<span class="t m" style="left:934.00px;top:781.48px;color:#cf8e6d">in</span>
<span class="t m" style="left:970.00px;top:781.48px;color:#bcbec4"> </span>
<span class="t m" style="left:988.00px;top:781.48px;color:#8888c6">range</span>
<span class="t m" style="left:1078.00px;top:781.48px;color:#bcbec4">(</span>
<span class="t m" style="left:1096.00px;top:781.48px;color:#2aacb8">20001</span>
<span class="t m" style="left:1186.00px;top:781.48px;color:#bcbec4">):</span>
<span class="t m" style="left:826.00px;top:833.48px;color:#bcbec4">    payload += </span>
<span class="t m" style="left:1096.00px;top:833.48px;color:#8888c6">str</span>
<span class="t m" style="left:1150.00px;top:833.48px;color:#bcbec4">(elf.rand() % </span>
<span class="t m" style="left:1402.00px;top:833.48px;color:#2aacb8">7</span>
<span class="t m" style="left:1420.00px;top:833.48px;color:#bcbec4"> + </span>
<span class="t m" style="left:1474.00px;top:833.48px;color:#2aacb8">1</span>
<span class="t m" style="left:1492.00px;top:833.48px;color:#bcbec4">) + </span>
<span class="t m" style="left:1564.00px;top:833.48px;color:#6aab73">&#x27;</span>
<span class="t m" style="left:1582.00px;top:833.48px;color:#cf8e6d">\n</span>
<span class="t m" style="left:1618.00px;top:833.48px;color:#6aab73">&#x27;</span>
<span class="t m" style="left:826.00px;top:937.48px;color:#bcbec4">p = remote(</span>
<div style="left:1029px;top:933px;width:85.5px;height:43.5px;border-radius:8px;background:#2b2d30"></div>
<span class="t" style="left:1038.96px;top:937.49px;font:400 28px/36px 'Liberation Sans',sans-serif;color:#868a91;letter-spacing:1.524px;">host:</span>
<span class="t m" style="left:1119.00px;top:937.48px;color:#6aab73">&#x27;27.25.151.12&#x27;</span>
<span class="t m" style="left:1371.00px;top:937.48px;color:#bcbec4">, </span>
<div style="left:1411px;top:933px;width:84px;height:43.5px;border-radius:8px;background:#2b2d30"></div>
<span class="t" style="left:1420.90px;top:937.49px;font:400 28px/36px 'Liberation Sans',sans-serif;color:#868a91;letter-spacing:2.208px;">port:</span>
<span class="t m" style="left:1499.00px;top:937.48px;color:#2aacb8">39666</span>
<span class="t m" style="left:1589.00px;top:937.48px;color:#bcbec4">)</span>
<span class="t m" style="left:826.00px;top:989.48px;color:#bcbec4">p.sendline(</span>
<span class="t m" style="left:1024.00px;top:989.48px;color:#6aab73">&#x27;abc&#x27;</span>
<span class="t m" style="left:1114.00px;top:989.48px;color:#bcbec4">)</span>
<span class="t m" style="left:826.00px;top:1041.48px;color:#bcbec4">p.sendline(payload)</span>
<span class="t m" style="left:826.00px;top:1145.48px;color:#bcbec4">p.interactive()</span>
<svg class="i" style="left:3077px;top:425px;" width="27" height="21" viewBox="0 0 27 21"><path d="M2.5 11.5 L9.5 18 L24 2.8" fill="none" stroke="#5fa564" stroke-width="3.4" stroke-linecap="round" stroke-linejoin="round"/></svg>
<div style="left:3098.5px;top:462.5px;width:16.3px;height:562.5px;background:#4b4c4f;"></div>
<div style="left:83px;top:1260px;width:3034px;height:82px;background:#2b2d30;"></div>
<div style="left:83px;top:1259px;width:584px;height:2px;background:#1e1f22;"></div>
<div style="left:83px;top:1341px;width:3034px;height:2px;background:#1e1f22;"></div>
<div style="left:83px;top:1343px;width:3034px;height:68px;background:#2b2d30;"></div>
<div style="left:83px;top:1410.5px;width:3034px;height:1.5px;background:#1e1f22;"></div>
<div style="left:83px;top:1412px;width:76px;height:379px;background:#2b2d30;"></div>
<div style="left:159px;top:1412px;width:2958px;height:379px;background:#1e1f22;"></div>
<div style="left:1px;top:1790.5px;width:3197px;height:1.5px;background:#1e1f22;"></div>
<svg class="c" style="left:105.80px;top:1315.80px" width="1" height="1" fill="#dfe1e5"><text x="0" y="0" font-size="30.2" font-weight="700">运行</text></svg>
<svg class="i" style="left:225px;top:1286px;" width="29" height="29" viewBox="1 1 14 14"><path d="M7.9 1C5 1 5.2 2.3 5.2 2.3V4H8V4.6H3.2C3.2 4.6 1 4.3 1 8C1 11.7 2.9 11.5 2.9 11.5H4.3V9.6C4.3 9.6 4.2 7.7 6.2 7.7H9.7C9.7 7.7 11.5 7.7 11.5 5.9V2.9C11.5 2.9 11.8 1 7.9 1Z" fill="#3d8fbd"/><circle cx="6.3" cy="2.65" r="0.62" fill="#2b2d30"/><g transform="rotate(180 8 8)"><path d="M7.9 1C5 1 5.2 2.3 5.2 2.3V4H8V4.6H3.2C3.2 4.6 1 4.3 1 8C1 11.7 2.9 11.5 2.9 11.5H4.3V9.6C4.3 9.6 4.2 7.7 6.2 7.7H9.7C9.7 7.7 11.5 7.7 11.5 5.9V2.9C11.5 2.9 11.8 1 7.9 1Z" fill="#f2c037"/><circle cx="6.3" cy="2.65" r="0.62" fill="#2b2d30"/></g></svg>
<div style="left:241.5px;top:1283.5px;width:14.5px;height:14.5px;border-radius:50%;background:#57965c;border:1.5px solid #2b2d30;box-sizing:border-box"></div>
<span class="t" style="left:262.31px;top:1282.06px;font:400 33px/43px 'Liberation Sans',sans-serif;color:#dfe1e5;letter-spacing:0.269px;">main</span>
<svg class="i" style="left:359.5px;top:1296px;" width="14.5" height="14.5" viewBox="0 0 14.5 14.5"><path d="M1 1 L13.5 13.5 M13.5 1 L1 13.5" stroke="#868a91" stroke-width="1.7" fill="none"/></svg>
<div style="left:199px;top:1337px;width:197.5px;height:6px;border-radius:3px;background:#3574f0"></div>
<div style="left:3020.4px;top:1288.9px;width:4.2px;height:4.2px;border-radius:50%;background:#ced0d6"></div>
<div style="left:3020.4px;top:1298.9px;width:4.2px;height:4.2px;border-radius:50%;background:#ced0d6"></div>
<div style="left:3020.4px;top:1308.9px;width:4.2px;height:4.2px;border-radius:50%;background:#ced0d6"></div>
<div style="left:3061.5px;top:1300px;width:26px;height:2px;background:#ced0d6;"></div>
<svg class="i" style="left:107px;top:1361px;" width="34" height="34" viewBox="0 0 34 34"><path d="M12.5 26 A10.2 10.2 0 1 1 23.5 11.5" fill="none" stroke="#ced0d6" stroke-width="2.2" stroke-linecap="round"/><path d="M17 10.5 H24.2 V3.3" fill="none" stroke="#ced0d6" stroke-width="2.2" stroke-linecap="round" stroke-linejoin="round"/><path d="M17.2 19.2 L29.2 25.6 L17.2 32 Z" fill="#2e4530" stroke="#5fad65" stroke-width="2.2" stroke-linejoin="round"/></svg>
<div style="left:163px;top:1365px;width:19.4px;height:19.4px;border:2.3px solid #db5c5c;border-radius:4.5px;background:#5e3838"></div>
<div style="left:207.3px;top:1357px;width:1.6px;height:40px;background:#43454a;"></div>
<div style="left:238.2px;top:1364.2px;width:4.6px;height:4.6px;border-radius:50%;background:#ced0d6"></div>
<div style="left:238.2px;top:1374.7px;width:4.6px;height:4.6px;border-radius:50%;background:#ced0d6"></div>
<div style="left:238.2px;top:1385.2px;width:4.6px;height:4.6px;border-radius:50%;background:#ced0d6"></div>
<svg class="i" style="left:110px;top:1436px;" width="22" height="26" viewBox="0 0 22 26"><path d="M11 25 V2.5 M2.2 11 L11 2.2 L19.8 11" fill="none" stroke="#5a5d63" stroke-width="2.2" stroke-linecap="round" stroke-linejoin="round"/></svg>
<svg class="i" style="left:110px;top:1488px;" width="22" height="26" viewBox="0 0 22 26"><path d="M11 1 V23.5 M2.2 15 L11 23.8 L19.8 15" fill="none" stroke="#5a5d63" stroke-width="2.2" stroke-linecap="round" stroke-linejoin="round"/></svg>
<svg class="i" style="left:106px;top:1542px;overflow:visible" width="30" height="26" viewBox="0 0 30 26"><g fill="none" stroke="#ced0d6" stroke-width="2.2" stroke-linecap="round" stroke-linejoin="round"><path d="M1.5 2.2 H28.5 M1.5 11.2 H22.5 a5.2 5.2 0 0 1 0 10.4 H16 M1.5 20.5 H9 M20 17.2 L15.6 21.6 L20 26"/></g></svg>
<svg class="i" style="left:106px;top:1593px;" width="30" height="24" viewBox="0 0 30 24"><g fill="none" stroke="#ced0d6" stroke-width="2.2" stroke-linecap="round" stroke-linejoin="round"><path d="M1.5 2.8 H11 M1.5 11.3 H11 M1.5 22 H28.5 M21 1.5 V15 M14.8 9.6 L21 15.8 L27.2 9.6"/></g></svg>
<svg class="i" style="left:106px;top:1644px;" width="30" height="26" viewBox="0 0 30 26"><g fill="none" stroke="#ced0d6" stroke-width="2.2" stroke-linejoin="round"><path d="M8 8 V2 H22 V8"/><path d="M8 19.5 H3.8 a2.2 2.2 0 0 1 -2.2 -2.2 V10.2 a2.2 2.2 0 0 1 2.2 -2.2 H26.2 a2.2 2.2 0 0 1 2.2 2.2 V17.3 a2.2 2.2 0 0 1 -2.2 2.2 H22"/><rect x="8" y="15" width="14" height="9.5"/></g><circle cx="23.8" cy="11.8" r="1.3" fill="#ced0d6"/></svg>
<svg class="i" style="left:108px;top:1694px;" width="26" height="30" viewBox="0 0 26 30"><g fill="none" stroke="#ced0d6" stroke-width="2.2" stroke-linecap="round" stroke-linejoin="round"><path d="M1.5 7 H24.5 M8.5 6.5 C8.5 1 17.5 1 17.5 6.5 M4 7.5 V25.5 a3 3 0 0 0 3 3 H19 a3 3 0 0 0 3 -3 V7.5 M10.3 13 V22.5 M15.7 13 V22.5"/></g></svg>
<span class="t m" style="left:187px;top:1434.98px;color:#bcbec4">Please enter the number you want to guess: Congratulations, you win!</span>
<span class="t m" style="left:187px;top:1486.98px;color:#bcbec4">Round 20000</span>
<span class="t m" style="left:187px;top:1538.98px;color:#bcbec4">Please enter the number you want to guess: Congratulations, you win!</span>
<span class="t m" style="left:187px;top:1590.98px;color:#bcbec4">Round 20001</span>
<span class="t m" style="left:187px;top:1642.98px;color:#bcbec4">Please enter the number you want to guess: Congratulations, you win!</span>
<span class="t m" style="left:187px;top:1694.98px;color:#bcbec4">It&#x27;s your reward, take advantage of it.</span>
<span class="t m" style="left:183.5px;top:1746.98px;color:#6aab73;font-style:italic">ls</span>
<div style="left:3098.5px;top:1737px;width:16.3px;height:51.5px;background:#45464a;"></div>
<div style="left:1px;top:1792px;width:3197px;height:71px;background:#2b2d30;"></div>
<div style="left:29px;top:1819px;width:12px;height:12px;border:2.2px solid #548af7;border-radius:3.6px;background:#25324d"></div>
<span class="t" style="left:52.60px;top:1805.56px;font:400 33px/43px 'Liberation Sans',sans-serif;color:#8f9299;letter-spacing:0.307px;">ctfwork</span>
<svg class="i" style="left:179.5px;top:1818px;" width="9" height="14.6" viewBox="0 0 9.2 16"><path d="M1.2 1.2 L8 8 L1.2 14.8" fill="none" stroke="#8f9299" stroke-width="2.0" stroke-linecap="round" stroke-linejoin="round"/></svg>
<svg class="i" style="left:211px;top:1811px;" width="28" height="28" viewBox="1 1 14 14"><path d="M7.9 1C5 1 5.2 2.3 5.2 2.3V4H8V4.6H3.2C3.2 4.6 1 4.3 1 8C1 11.7 2.9 11.5 2.9 11.5H4.3V9.6C4.3 9.6 4.2 7.7 6.2 7.7H9.7C9.7 7.7 11.5 7.7 11.5 5.9V2.9C11.5 2.9 11.8 1 7.9 1Z" fill="#548af7"/><circle cx="6.3" cy="2.65" r="0.62" fill="#2b2d30"/><g transform="rotate(180 8 8)"><path d="M7.9 1C5 1 5.2 2.3 5.2 2.3V4H8V4.6H3.2C3.2 4.6 1 4.3 1 8C1 11.7 2.9 11.5 2.9 11.5H4.3V9.6C4.3 9.6 4.2 7.7 6.2 7.7H9.7C9.7 7.7 11.5 7.7 11.5 5.9V2.9C11.5 2.9 11.8 1 7.9 1Z" fill="#f2c55c"/><circle cx="6.3" cy="2.65" r="0.62" fill="#2b2d30"/></g></svg>
<span class="t" style="left:248.81px;top:1805.56px;font:400 33px/43px 'Liberation Sans',sans-serif;color:#8f9299;letter-spacing:-0.382px;">main.py</span>
<span class="t" style="left:2348.14px;top:1808.25px;font:400 31px/40px 'Liberation Sans',sans-serif;color:#a4a7ae;letter-spacing:-0.088px;">15:16</span>
<span class="t" style="left:2455.96px;top:1808.25px;font:400 31px/40px 'Liberation Sans',sans-serif;color:#a4a7ae;letter-spacing:-1.393px;">LF</span>
<span class="t" style="left:2522.11px;top:1808.25px;font:400 31px/40px 'Liberation Sans',sans-serif;color:#a4a7ae;letter-spacing:-0.771px;">UTF-8</span>
<span class="t" style="left:2645.79px;top:1808.25px;font:400 31px/40px 'Liberation Sans',sans-serif;color:#a4a7ae;">4</span>
<svg class="c" style="left:2672.00px;top:1839.60px" width="1" height="1" fill="#a4a7ae"><text x="0" y="0" font-size="29.5">个空格</text></svg>
<span class="t" style="left:2791.89px;top:1807.18px;font:400 31.8px/41px 'Liberation Sans',sans-serif;color:#a4a7ae;letter-spacing:0.031px;">Python 3.12 (ctfwork)</span>
<svg class="i" style="left:3129px;top:1813px;" width="30" height="28" viewBox="0 0 30 28"><g fill="none" stroke="#ced0d6" stroke-width="2.3" stroke-linecap="round"><rect x="2" y="11.5" width="18.5" height="13.5" rx="3"/><path d="M14 11 V8 a6.3 6.3 0 0 1 12.6 0 V9.5"/><path d="M11.2 16 V20.5"/></g></svg>
<div style="left:0px;top:1863px;width:3200px;height:41px;background:#282828;"></div>
<div style="left:0px;top:1863px;width:3200px;height:1px;background:#6e6e6e;"></div>
<svg class="c" style="left:1.00px;top:1893.30px" width="1" height="1" fill="#ffffff"><text x="0" y="0" font-size="24">要将输入定向到该虚拟机，请将鼠标指针移入其中或按</text></svg>
<span class="t" style="left:582.81px;top:1868.85px;font:400 23.5px/31px 'Liberation Sans',sans-serif;color:#ffffff;letter-spacing:2.080px;">Ctrl+G</span>
<svg class="c" style="left:663.00px;top:1893.30px" width="1" height="1" fill="#ffffff"><text x="0" y="0" font-size="24">。</text></svg>
<div style="left:3198px;top:46px;width:1px;height:1818px;background:#6e6e6e;"></div>
<div style="left:3199px;top:46px;width:1px;height:1818px;background:#2e2e2e;"></div>
<svg class="i" style="left:2800px;top:1860px;" width="400" height="44" viewBox="0 0 400 44"><path d="M20.2 36.7 L25 14.2 H46.3 L50 36.7 Z M20.4 28.9 H50" fill="none" stroke="#808080" stroke-width="2"/><circle cx="44.1" cy="34" r="5.3" fill="#84d01a"/><circle cx="71.9" cy="24.9" r="13.1" fill="none" stroke="#808080" stroke-width="1.6"/><circle cx="71.9" cy="24.9" r="2.5" fill="none" stroke="#808080" stroke-width="1.5"/><path d="M64.5 20.5 A8.6 8.6 0 0 1 68 17.2 M79.3 29.3 A8.6 8.6 0 0 1 75.8 32.6" fill="none" stroke="#808080" stroke-width="1.5"/><rect x="96.4" y="12.5" width="15.2" height="8.4" fill="none" stroke="#808080" stroke-width="2"/><rect x="106.9" y="20.6" width="14.8" height="9" fill="#282828" stroke="#808080" stroke-width="2"/><path d="M100 24.6 H106" stroke="#808080" stroke-width="2" fill="none"/><path d="M96.2 26 V37.6 H112.5" fill="none" stroke="#808080" stroke-width="1.8" stroke-dasharray="2 2"/><circle cx="117.9" cy="34" r="5.3" fill="#84d01a"/><path d="M139.7 22.5 V14.6 H152.6 V22.5" fill="none" stroke="#808080" stroke-width="2"/><rect x="133.3" y="22.8" width="25.3" height="10.8" fill="none" stroke="#808080" stroke-width="2"/><rect x="139.7" y="30.3" width="12.9" height="7" fill="#282828" stroke="#808080" stroke-width="2"/><path d="M172.3 20.6 H175.5 L181.9 15.5 V36.6 L175.5 31.5 H172.3 Z" fill="none" stroke="#808080" stroke-width="2"/><path d="M185.6 22 A5.6 5.6 0 0 1 187 28.5 M188.6 19.6 A9.5 9.5 0 0 1 191.3 27" fill="none" stroke="#808080" stroke-width="1.7"/><circle cx="192.1" cy="34" r="5.3" fill="#84d01a"/><circle cx="219.7" cy="24.9" r="11" fill="none" stroke="#6e6e6e" stroke-width="1.6"/><circle cx="219.7" cy="24.9" r="4.8" fill="none" stroke="#6e6e6e" stroke-width="1.5"/><path d="M219.7 23 V25.2 H221.3" fill="none" stroke="#6e6e6e" stroke-width="1.1"/><path d="M213 35.2 L214 37.2 H225.4 L226.4 35.2" fill="none" stroke="#6e6e6e" stroke-width="1.5"/><path d="M248.8 23 V12.2 H265.6 V23" fill="none" stroke="#6a6a6a" stroke-width="2"/><rect x="253" y="16.4" width="2.3" height="2.3" fill="#6a6a6a"/><rect x="259" y="16.4" width="2.3" height="2.3" fill="#6a6a6a"/><path d="M243 38.5 V28 a4.7 4.7 0 0 1 4.7 -4.7 H266.3 a4.7 4.7 0 0 1 4.7 4.7 V38.5 Z" fill="#5e5e5e"/><circle cx="288.7" cy="24" r="5" fill="none" stroke="#727272" stroke-width="1.7"/><path d="M281.6 35.5 C282.5 28.5 294.9 28.5 295.8 35.5" fill="none" stroke="#727272" stroke-width="1.7"/><path d="M298 21.5 V25 M301.5 19.8 A8 8 0 0 1 301.5 27.5 M305 18 A11 11 0 0 1 305 29" fill="none" stroke="#666" stroke-width="1.3" stroke-dasharray="2.2 1"/><path d="M332.2 12.2 H357.9 V29.5 L349.9 37.5 H332.2 Z" fill="#36e2d0" stroke="#858080" stroke-width="2"/><path d="M357.9 29.5 H350.2 V37.2" fill="none" stroke="#858080" stroke-width="2"/></svg>
<div style="left:3118.1px;top:1867px;width:2.2px;height:37px;background:#ffffff;"></div></body></html>
